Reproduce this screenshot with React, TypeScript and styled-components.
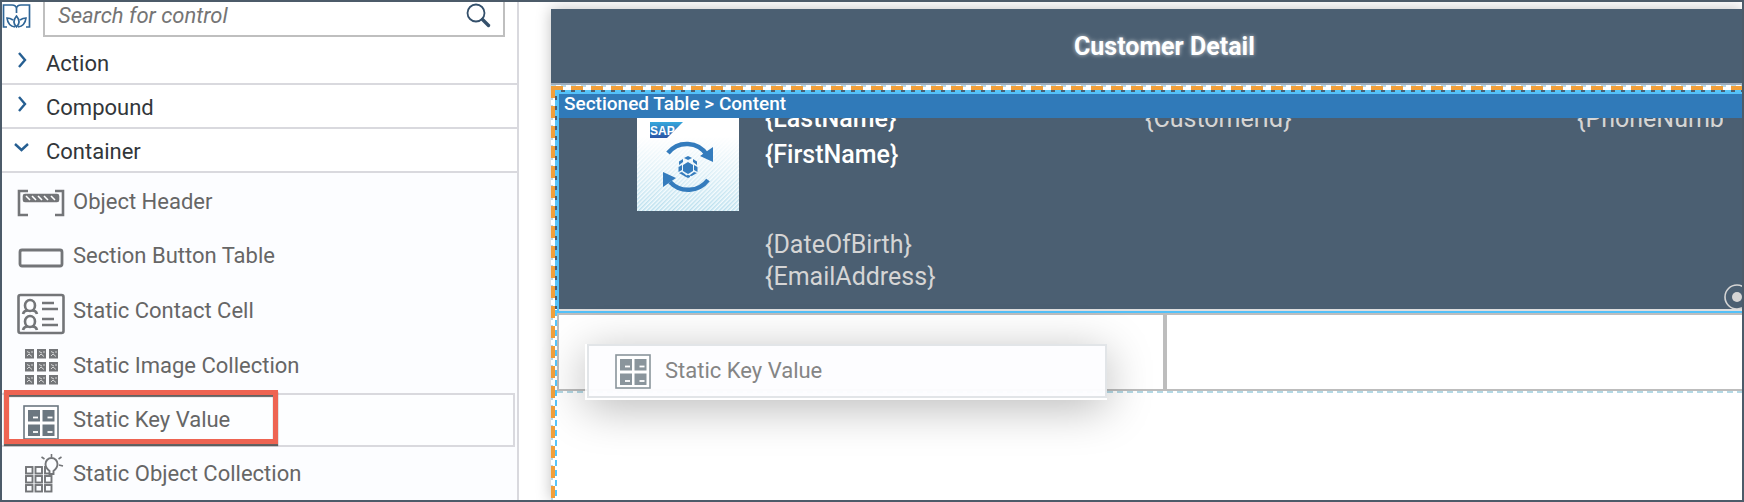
import React from "react";
import styled, { createGlobalStyle, css } from "styled-components";

const Global = createGlobalStyle`
  * { box-sizing: border-box; }
  html, body, #root { height: 100%; }
  body { margin: 0; font-family: Roboto, "Liberation Sans", sans-serif; }
  button, input { font: inherit; }
`;

const Frame = styled.div`
  display: flex;
  height: 100%;
  border: 2px solid #4c5b69;
  background: #fff;
  overflow: hidden;
`;

const Sidebar = styled.aside`
  display: flex;
  flex-direction: column;
  flex: 0 0 517px;
  border-right: 2px solid #d9d9de;
  overflow: hidden;
`;

const SearchRow = styled.div`
  display: flex;
  align-items: flex-start;
  gap: 12px;
  padding-right: 12px;
`;

const SearchField = styled.label`
  display: flex;
  flex: 1;
  align-items: center;
  height: 35px;
  padding: 0 12px 7px 13px;
  border: 2px solid #bfbfbf;
  border-top: 0;
`;

const SearchInput = styled.input`
  flex: 1;
  min-width: 0;
  height: 26px;
  padding: 0;
  border: 0;
  outline: 0;
  background: none;
  font-size: 22px;
  color: #333;
  &::placeholder { color: #757575; font-style: italic; opacity: 1; }
`;

const GroupButton = styled.button`
  display: flex;
  align-items: center;
  flex: none;
  gap: 12px;
  width: 100%;
  height: 44px;
  padding: 4px 12px 0;
  border: 0;
  border-bottom: 2px solid #d9d9de;
  background: #fff;
  font-size: 22px;
  line-height: 26px;
  color: #32363a;
  text-align: left;
  cursor: pointer;
`;

const Groups = styled.div`
  display: flex;
  flex-direction: column;
  padding-top: 4px;
`;

const Chevron = styled.svg`
  flex: none;
  margin-bottom: 8px;
`;

const ItemList = styled.ul`
  flex: 1;
  margin: 0;
  padding: 2px 2px 0 0;
  list-style: none;
  background: #fcfdff;
`;

const Item = styled.li<{ $selected?: boolean; $tall?: boolean }>`
  position: relative;
  display: flex;
  align-items: center;
  height: ${p => (p.$tall ? "56px" : "54px")};
  gap: 6px;
  padding-left: 15px;
  border: 2px solid transparent;
  border-left: 0;
  font-size: 22px;
  line-height: 26px;
  color: #666;
  ${p => p.$selected && css`border-color: #d9d9de; background: #fdfeff;`}
`;

const ItemIcon = styled.svg<{ $color?: string }>`
  flex: none;
  color: ${p => p.$color ?? "#737578"};
`;

const Callout = styled.div`
  position: absolute;
  z-index: 1;
  left: 2px;
  top: -5px;
  width: 274px;
  height: 54px;
  border: 5px solid #ee6452;
  box-shadow: 0 2px 1px rgba(60, 60, 60, 0.8), inset 0 2px 1px rgba(60, 60, 60, 0.8);
`;

const Stage = styled.main`
  flex: 1;
  min-width: 0;
  display: flex;
  padding: 7px 0 0 32px;
`;

const Device = styled.section`
  flex: 1;
  min-width: 0;
  display: flex;
  flex-direction: column;
  background: #fff;
  box-shadow: 0 0 14px rgba(0, 0, 0, 0.25);
`;

const TitleBar = styled.header`
  display: flex;
  flex: none;
  align-items: center;
  height: 76px;
  padding: 2px 0 0 523px;
  border-bottom: 2px solid #9fadbc;
  background: #4b5f72;
`;

const Title = styled.h1`
  margin: 0;
  font-size: 25px;
  line-height: 32px;
  font-weight: 700;
  color: #fff;
  text-shadow: 0 0 4px rgba(255, 255, 255, 0.7);
  white-space: nowrap;
`;

const DropZone = styled.div`
  flex: 1;
  display: flex;
  flex-direction: column;
  padding: 5px 0 0 4px;
  background:
    repeating-linear-gradient(90deg, #f19f3a 0 12px, transparent 12px 20px) 0 1px / 100% 4px no-repeat,
    repeating-linear-gradient(180deg, #f19f3a 0 12px, transparent 12px 20px) 0 1px / 4px 100% no-repeat,
    repeating-linear-gradient(90deg, #b8d9e6 0 5px, #fff 5px 10px) 0 0 / 100% 2px no-repeat,
    repeating-linear-gradient(180deg, #b8d9e6 0 5px, #fff 5px 10px) 0 0 / 2px 100% no-repeat,
    #fff;
`;

const Page = styled.div`
  flex: 1;
  display: flex;
  flex-direction: column;
  padding: 2px 0 0 2px;
  background:
    repeating-linear-gradient(90deg, #58c5f8 0 6px, #4b5f72 6px 10px) 0 0 / 100% 2px no-repeat,
    repeating-linear-gradient(180deg, #58c5f8 0 6px, transparent 6px 10px) 0 0 / 2px 100% no-repeat,
    linear-gradient(#4b5f72, #4b5f72) 0 0 / 2px 219px no-repeat;
`;

const SelectedSection = styled.div`
  flex: none;
  height: 221px;
  border: 2px solid #54c1f9;
  border-right: 0;
  background: #4b5f72;
`;

const Breadcrumb = styled.div`
  height: 24px;
  padding-left: 5px;
  background: #307ab9;
  font-size: 19px;
  line-height: 20px;
  font-weight: 500;
  color: #fff;
`;

const ObjectHeader = styled.div`
  display: flex;
  height: 193px;
  padding-left: 78px;
  overflow: hidden;
  border-bottom: 2px solid #dedede;
`;

const Thumb = styled.svg`
  flex: none;
`;

const Details = styled.div`
  flex: none;
  width: 406px;
  padding-left: 26px;
`;

const Side = styled.div<{ $wide?: boolean }>`
  flex: none;
  width: ${p => (p.$wide ? "432px" : "146px")};
  overflow: hidden;
`;

const Field = styled.div<{ $strong?: boolean; $cut?: boolean; $gap?: boolean }>`
  box-sizing: content-box;
  height: 32px;
  font-size: 25px;
  line-height: 32px;
  margin-top: ${p => (p.$cut ? "-15px" : p.$gap ? "58px" : "0")};
  padding-bottom: ${p => (p.$cut && p.$strong ? "4px" : "0")};
  font-weight: ${p => (p.$strong ? 500 : 400)};
  color: ${p => (p.$strong ? "#fff" : "#d5d5d5")};
  white-space: nowrap;
`;

const Marker = styled.svg`
  flex: none;
  align-self: flex-end;
`;

const Cells = styled.div`
  display: flex;
  flex: none;
  height: 80px;
  padding-bottom: 2px;
  background: repeating-linear-gradient(90deg, #b5d9e5 0 6px, transparent 6px 10px) 0 100% / 100% 2px no-repeat;
`;

const Cell = styled.div<{ $first?: boolean }>`
  flex: ${p => (p.$first ? "0 0 608px" : "1")};
  border: 2px solid #bdbdbd;
  border-right-width: ${p => (p.$first ? "2px" : "0")};
  background: #fff;
`;

const Ghost = styled.div`
  position: absolute;
  left: 585px;
  top: 344px;
  width: 522px;
  height: 56px;
  padding: 0 0 2px 2px;
  background: rgba(255, 255, 255, 0.8);
  box-shadow: 0 8px 46px rgba(0, 0, 0, 0.28);
`;

const GhostInner = styled.div`
  display: flex;
  align-items: center;
  gap: 14px;
  height: 100%;
  padding-left: 26px;
  border: 2px solid #e2e5e8;
  background: rgba(252, 253, 255, 0.8);
  font-size: 22px;
  line-height: 26px;
  color: #858585;
`;

const HeaderIcon = () => (
  <ItemIcon width="50" height="40" viewBox="0 0 50 40" fill="none" stroke="currentColor" strokeWidth="2.6">
    <path d="M11 9H2v24h9M38 9h8v24h-8" />
    <rect x="7" y="13" width="34" height="6" rx="1" fill="currentColor" />
    <path d="M9 14l4 4M15 14l4 4M21 14l4 4M27 14l4 4M34 14l4 4" stroke="#fff" strokeWidth="1.6" />
  </ItemIcon>
);
const ButtonIcon = () => (
  <ItemIcon width="50" height="40" viewBox="0 0 50 40" fill="none" stroke="currentColor" strokeWidth="2.8">
    <rect x="3" y="14" width="42" height="16" rx="2" />
  </ItemIcon>
);
const ContactIcon = () => (
  <ItemIcon width="50" height="48" viewBox="0 -6 50 48" fill="none" stroke="currentColor" strokeWidth="2.6">
    <rect x="1.5" y="2" width="45" height="38" rx="2" />
    {[0, 16].map(y => (
      <g key={y} transform={`translate(0 ${y})`}>
        <ellipse cx="13" cy="12.500" rx="5" ry="5.500" />
        <path d="M6 21q1-4 5-3.500M20 21q-1-4-5-3.500" />
        <path d="M25 10h12M25 16h16" />
      </g>
    ))}
  </ItemIcon>
);
const grid = [0, 1, 2];
const ImagesIcon = () => (
  <ItemIcon width="50" height="40" viewBox="0 0 50 40">
    {grid.map(r => grid.map(c => (
      <g key={`${r}${c}`} transform={`translate(${8 + c * 12} ${3 + r * 13})`}>
        <rect width="9" height="9.500" fill="currentColor" />
        <path d="M2 7l2-2 3 2.500M2 2.500l3 1.500M6 3h2" stroke="#d4d5d6" strokeWidth="1" fill="none" />
      </g>
    )))}
  </ItemIcon>
);
const KeyArt = () => (
  <>
    <rect x="1" y="1" width="34" height="33" fill="#fff" stroke="currentColor" strokeWidth="1.6" />
    {[0, 1].map(r => [0, 1].map(c => (
      <g key={`${r}${c}`} transform={`translate(${5 + c * 14.5} ${5 + r * 14.5})`}>
        <rect width="12" height="11.5" fill="currentColor" />
        <path d="M5 7.500h5" stroke="#fff" strokeWidth="1.8" />
      </g>
    )))}
  </>
);
const KeyIcon = () => (
  <ItemIcon width="50" height="40" viewBox="-6 -5 50 40" $color="#6b7780">
    <KeyArt />
  </ItemIcon>
);
const ObjectsIcon = () => (
  <ItemIcon width="50" height="40" viewBox="0 0 50 40" fill="none" stroke="currentColor" strokeWidth="1.9">
    {grid.map(r => grid.map(c => (
      <rect key={`${r}${c}`} x={9 + c * 9.5} y={13 + r * 9} width="6.500" height="6.500" />
    )))}
    <path d="M32.500 20v-3q-4-3-4-7a6 6 0 0 1 12 0q0 4-4 7v3z" fill="#fcfdff" />
    <path d="M34.500 3V0M27.500 5l-3-2M41.500 5l3-2M42 11l4 1" strokeWidth="1.600" />
  </ItemIcon>
);

const items = [
  { label: "Object Header", icon: <HeaderIcon /> },
  { label: "Section Button Table", icon: <ButtonIcon /> },
  { label: "Static Contact Cell", icon: <ContactIcon />, tall: true },
  { label: "Static Image Collection", icon: <ImagesIcon /> },
  { label: "Static Key Value", icon: <KeyIcon />, selected: true },
  { label: "Static Object Collection", icon: <ObjectsIcon /> },
];

const groups = [
  { label: "Action", open: false },
  { label: "Compound", open: false },
  { label: "Container", open: true },
];

export default function App() {
  return (
    <Frame>
      <Global />
      <Sidebar>
        <SearchRow>
          <svg width="29" height="28" viewBox="0 0 29 28" fill="none" stroke="#2f6596" strokeWidth="1.7">
            <path d="M5 25H1.500V3H10q4 0 4.500 3.500Q15 3 19 3h8.500v22H24M14.500 6v5" />
            <path d="M14.500 25q-5-5 0-11q5 6 0 11zM11 18q-3-2-6-2q1 8 8 9M18 18q3-2 6-2q-1 8-8 9" />
          </svg>
          <SearchField>
            <SearchInput type="text" placeholder="Search for control" aria-label="Search for control" />
            <svg width="26" height="26" viewBox="0 0 26 26" fill="none" stroke="#34506b">
              <circle cx="11" cy="11" r="8.500" strokeWidth="1.8" />
              <path d="M17.500 17.500l6 6" strokeWidth="3.4" strokeLinecap="round" />
            </svg>
          </SearchField>
        </SearchRow>
        <Groups>
          {groups.map(g => (
            <GroupButton key={g.label} type="button" aria-expanded={g.open}>
              <Chevron width="20" height="20" viewBox="0 0 20 20" fill="none" stroke="#265f92" strokeWidth="2.4">
                <path d={g.open ? "M1 6l6.500 6 6.500-6" : "M5 3l6 7-6 7"} />
              </Chevron>
              {g.label}
            </GroupButton>
          ))}
        </Groups>
        <ItemList>
          {items.map(i => (
            <Item key={i.label} $selected={i.selected} $tall={i.tall}>
              {i.icon}
              {i.label}
              {i.selected && <Callout />}
            </Item>
          ))}
        </ItemList>
      </Sidebar>
      <Stage>
        <Device>
          <TitleBar>
            <Title>Customer Detail</Title>
          </TitleBar>
          <DropZone>
            <Page>
              <SelectedSection>
                <Breadcrumb>Sectioned Table &gt; Content</Breadcrumb>
                <ObjectHeader>
                  <Thumb width="102" height="93" viewBox="0 0 102 93">
                    <defs>
                      <linearGradient id="fade" x1="0" y1="0" x2="0" y2="1">
                        <stop offset="0.2" stopColor="#fff" />
                        <stop offset="1" stopColor="#fff" stopOpacity="0" />
                      </linearGradient>
                      <linearGradient id="sap" x1="0" y1="0" x2="0" y2="1">
                        <stop offset="0" stopColor="#36a7dc" />
                        <stop offset="1" stopColor="#2b55a6" />
                      </linearGradient>
                      <pattern id="stripes" width="3" height="3" patternUnits="userSpaceOnUse" patternTransform="rotate(45)">
                        <rect width="3" height="3" fill="#f2fafd" />
                        <rect width="1.5" height="3" fill="#b9dfee" />
                      </pattern>
                    </defs>
                    <rect width="102" height="93" fill="url(#stripes)" />
                    <rect width="102" height="93" fill="url(#fade)" />
                    <path d="M13 4h33L30 20H13z" fill="url(#sap)" />
                    <text x="13" y="17" fontSize="12" fontWeight="700" fontFamily="Liberation Sans, sans-serif" fill="#fff">SAP</text>
                    <g fill="none" stroke="#347cbd" strokeWidth="4.500">
                      <path d="M31 35a24 24 0 0 1 39 2" />
                      <path d="M71 62a25 25 0 0 1-38 2" />
                    </g>
                    <path d="M76 29v15l-13-6zM26 54v15l13-9z" fill="#347cbd" />
                    <g fill="#347cbd" transform="translate(51 49)">
                      <path d="M0-5l5 3v6l-5 3-5-3v-6z" />
                      <path d="M0-11l4 2-4 2-4-2zM0 8l4 1-4 2-4-2zM-5-8v3l-4 3v-3.500zM5-8v3l4 3v-3.500zM-9.500 0l3.500-2v5l-3.500 2zM9.500 0L6-2v5l3.500 2zM-9 6l3-1 4 3v2zM9 6L6 5 2 8v2z" />
                    </g>
                  </Thumb>
                  <Details>
                    <Field $strong $cut>{"{LastName}"}</Field>
                    <Field $strong>{"{FirstName}"}</Field>
                    <Field $gap>{"{DateOfBirth}"}</Field>
                    <Field>{"{EmailAddress}"}</Field>
                  </Details>
                  <Side $wide>
                    <Field $cut>{"{CustomerId}"}</Field>
                  </Side>
                  <Side>
                    <Field $cut>{"{PhoneNumber}"}</Field>
                  </Side>
                  <Marker width="26" height="26" viewBox="0 0 26 26">
                    <circle cx="14" cy="14" r="12" fill="none" stroke="#d5d5d5" strokeWidth="1.600" />
                    <circle cx="14" cy="14" r="5" fill="#d5d5d5" />
                  </Marker>
                </ObjectHeader>
              </SelectedSection>
              <Cells>
                <Cell $first />
                <Cell />
              </Cells>
            </Page>
          </DropZone>
        </Device>
      </Stage>
      <Ghost>
        <GhostInner>
          <ItemIcon width="36" height="35" viewBox="0 0 36 35" $color="#8a959c">
            <KeyArt />
          </ItemIcon>
          Static Key Value
        </GhostInner>
      </Ghost>
    </Frame>
  );
}
